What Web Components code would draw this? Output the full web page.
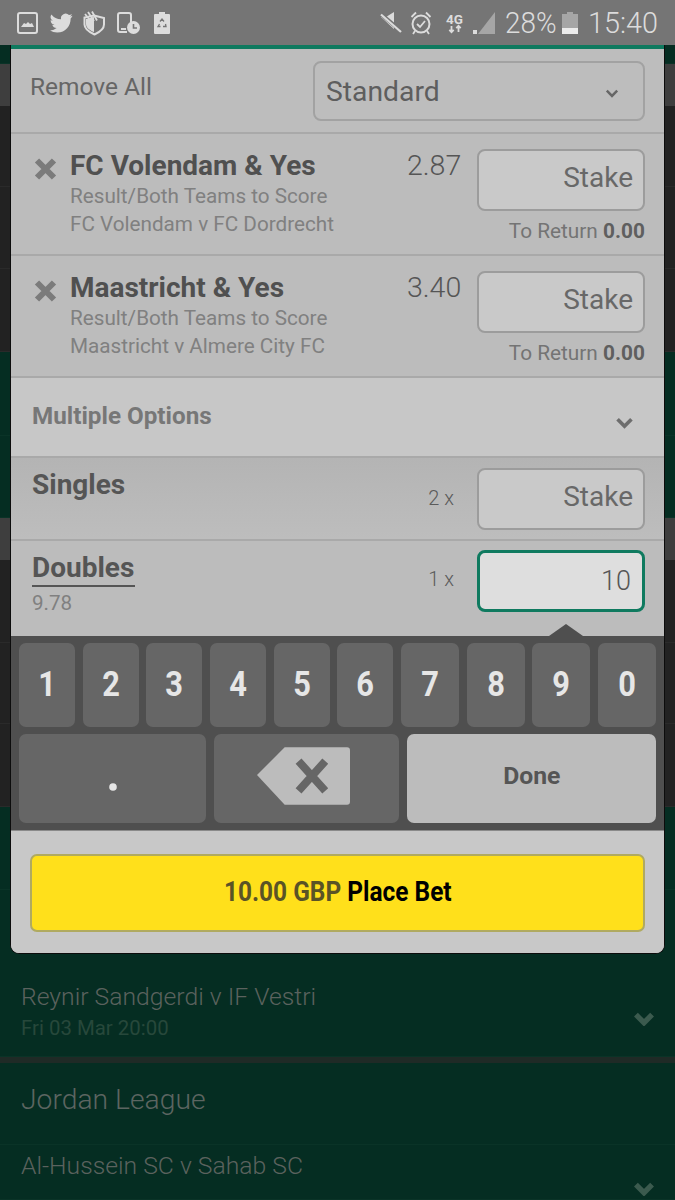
<!DOCTYPE html>
<html>
<head>
<meta charset="utf-8">
<title>Bet slip</title>
<style>
html,body{margin:0;padding:0;background:#052d22;}
body{width:675px;height:1200px;overflow:hidden;position:relative;font-family:Roboto,"Liberation Sans",sans-serif;}
</style>
</head>
<body>
<back-drop></back-drop>
<status-bar></status-bar>
<bet-slip>
  <slip-head></slip-head>
  <bet-row name="FC Volendam &amp; Yes" market="Result/Both Teams to Score" match="FC Volendam v FC Dordrecht" odds="2.87"></bet-row>
  <bet-row name="Maastricht &amp; Yes" market="Result/Both Teams to Score" match="Maastricht v Almere City FC" odds="3.40"></bet-row>
  <multi-head></multi-head>
  <multi-row kind="singles" name="Singles" count="2 x" value="Stake"></multi-row>
  <multi-row kind="doubles" name="Doubles" sub="9.78" count="1 x" value="10" focused></multi-row>
  <num-pad></num-pad>
  <place-bet></place-bet>
</bet-slip>

<script>
// text with a little horizontal tuning, the screenshot is stretched
class XT extends HTMLElement{
    constructor(){
        super();
        this.attachShadow({mode:"open"}).innerHTML = `
        <style>
        :host{display:inline-block;white-space:nowrap;transform:scaleX(var(--sx,1));transform-origin:var(--ox,left center);}
        </style><slot></slot>`;
    }
}
customElements.define("x-t",XT);

const chevron = (w,h,c,sw) => `<svg width="${w}" height="${h}" viewBox="0 0 20 13"><path d="M2.5 2.5 10 10l7.5-7.5" fill="none" stroke="${c}" stroke-width="${sw}"/></svg>`;

class BackDrop extends HTMLElement{
    constructor(){
        super();
        const band = (h,cls,inner='') => `<div class="b ${cls}" style="height:${h}px">${inner}</div>`;
        this.attachShadow({mode:"open"}).innerHTML = `
        <style>
        :host{display:block;}
        .b{box-sizing:border-box;position:relative;display:flex;flex-direction:column;}
        .g{background:#052d22;border-bottom:1px solid #0a3327;}
        .h{background:#3e3e3e;}
        .d{background:#222;border-bottom:1px solid #2a2a2a;}
        .sep{background:#1f2a26;}
        .row{padding:0 0 0 21px;flex-direction:row;justify-content:space-between;}
        .t{font-size:24px;color:#5b625e;line-height:28px;font-weight:300;--sx:1.03;}
        .s{font-size:20px;color:#27483b;line-height:24px;margin-top:5px;--sx:1.02;}
        .l{font-size:28px;color:#5c6561;font-weight:300;--sx:1.01;}
        .ch{align-self:flex-start;padding-right:20px;}
        </style>
        ${band(64,'g')}${band(42,'h')}
        ${band(81,'d')}${band(82,'d')}${band(83,'d')}
        ${band(84,'g')}${band(82,'g')}
        ${band(42,'h')}
        ${band(83,'d')}${band(81,'d')}${band(83,'d')}
        ${band(83,'g')}
        ${band(167,'g row',`<div style="padding-top:93px"><div class="t"><x-t>Reynir Sandgerdi v IF Vestri</x-t></div><div class="s"><x-t>Fri 03 Mar 20:00</x-t></div></div><div class="ch" style="padding-top:121px">${chevron(22,14,'#3b5a4e',5)}</div>`)}
        ${band(6,'sep')}
        ${band(82,'g row',`<div class="l" style="padding-top:20px"><x-t>Jordan League</x-t></div>`)}
        ${band(55,'g row',`<div class="t" style="padding-top:7px"><x-t>Al-Hussein SC v Sahab SC</x-t></div><div class="ch" style="padding-top:36px">${chevron(22,14,'#3b5a4e',5)}</div>`)}
        `;
    }
}
customElements.define("back-drop",BackDrop);

class StatusBar extends HTMLElement{
    constructor(){
        super();
        this.attachShadow({mode:"open"}).innerHTML = `
        <style>
        :host{position:absolute;left:0;top:0;width:675px;height:45px;box-sizing:border-box;background:#757575;display:flex;justify-content:space-between;align-items:center;padding:1px 18px 0 17px;color:#dcdcdc;}
        .side{display:flex;align-items:center;}
        svg{display:block;overflow:visible;}
        .pct,.time{font-size:30px;font-weight:300;line-height:44px;}
        .pct{--sx:.93;}
        .time{--sx:.96;}
        </style>
        <div class="side">
          <svg width="21" height="22" viewBox="0 0 21 22"><rect x="1" y="1" width="19" height="20" rx="2" fill="none" stroke="#dcdcdc" stroke-width="2"/><path d="M4 15l3-4 2 1 2-2 2 2 2-1 2 4z" fill="#dcdcdc"/></svg>
          <svg style="margin-left:12px" width="23" height="20" viewBox="0 0 24 20"><path d="M23.5 2.4a9.6 9.6 0 0 1-2.8.8A4.9 4.9 0 0 0 22.900.500a9.800 9.800 0 0 1-3.100 1.200 4.900 4.900 0 0 0-8.300 4.400A13.800 13.800 0 0 1 1.400 1a4.900 4.900 0 0 0 1.500 6.500 4.800 4.800 0 0 1-2.200-.6v.1a4.900 4.900 0 0 0 3.900 4.800 4.900 4.900 0 0 1-2.200.1 4.900 4.900 0 0 0 4.500 3.400A9.800 9.800 0 0 1 0 17.800 13.800 13.800 0 0 0 7.500 20c9 0 14-7.500 14-14v-.6a10 10 0 0 0 2-3z" fill="#dcdcdc"/></svg>
          <svg style="margin-left:9px" width="24" height="24" viewBox="0 0 24 24"><path d="M12 4.500l10 2.500v6.500c0 4.500-4 7.500-9.500 10C7 21 2.500 18 2.500 13.500V6.500z" fill="none" stroke="#dcdcdc" stroke-width="2"/><path d="M4 8 12 6v15c-4-1.500-8-4-8-8z" fill="#dcdcdc"/><path d="M6 1l6 9M10 .5l5 9M3 3l5 6" stroke="#dcdcdc" stroke-width="1.800" fill="none"/></svg>
          <svg style="margin-left:11px" width="23" height="22" viewBox="0 0 23 22"><path d="M10 20H3a2 2 0 0 1-2-2V3a2 2 0 0 1 2-2h9a2 2 0 0 1 2 2v7" fill="none" stroke="#dcdcdc" stroke-width="2"/><path d="M4 17h5" stroke="#dcdcdc" stroke-width="2"/><circle cx="16.500" cy="15.500" r="6.500" fill="#dcdcdc"/><path d="M16.500 12v4h3.500" fill="none" stroke="#757575" stroke-width="1.600"/></svg>
          <svg style="margin-left:14px" width="16" height="22" viewBox="0 0 16 22"><path d="M5 0h6v2h4a1 1 0 0 1 1 1v18a1 1 0 0 1-1 1H1a1 1 0 0 1-1-1V3a1 1 0 0 1 1-1h4z" fill="#dcdcdc"/><path d="M6 9.500l2-2.500 2 2.500M11.500 12l.5 2.500H9M6.500 14.500H4l1.500-2.500" fill="none" stroke="#757575" stroke-width="1.300"/></svg>
        </div>
        <div class="side">
          <svg width="23" height="22" viewBox="0 0 23 22"><path d="M1 5h5l8-5v17z" fill="#dcdcdc"/><path d="M1 2l21 18" stroke="#757575" stroke-width="4"/><path d="M1 2.500l20 17.500" stroke="#dcdcdc" stroke-width="2.200"/></svg>
          <svg style="margin-left:7px" width="22" height="24" viewBox="0 0 22 24"><circle cx="11" cy="13" r="8.500" fill="none" stroke="#dcdcdc" stroke-width="2"/><path d="M7 13l3 3 5-6" fill="none" stroke="#dcdcdc" stroke-width="1.800"/><path d="M1.500 6 6 1.500M20.500 6 16 1.500M5 20l-2 3M17 20l2 3" stroke="#dcdcdc" stroke-width="1.800"/></svg>
          <div class="net" style="margin-left:13px;width:19px;height:21px;display:flex;flex-direction:column;align-items:center;font-size:13.5px;font-weight:700;line-height:12px;"><span>4G</span><svg width="14" height="8" viewBox="0 0 14 8"><path d="M3.500 1v6M1.300 4.800 3.500 7.200l2.200-2.400M10.500 7V1M8.300 3.200 10.500.8l2.200 2.400" stroke="#dcdcdc" stroke-width="1.800" fill="none"/></svg></div>
          <svg style="margin-left:9px" width="22" height="22" viewBox="0 0 22 22"><path d="M22 0v22H5z" fill="#a6a6a6"/><path d="M0 22v-4l4 0v4z" fill="#dcdcdc"/></svg>
          <div class="pct" style="margin-left:10px;width:52px"><x-t>28%</x-t></div>
          <svg style="margin-left:5px" width="16" height="22" viewBox="0 0 16 22"><path d="M5 0h6v2h5v20H0V2h5z" fill="#a6a6a6"/><rect y="16" width="16" height="6" fill="#ececec"/></svg>
          <div class="time" style="margin-left:10px;width:69px"><x-t>15:40</x-t></div>
        </div>`;
    }
}
customElements.define("status-bar",StatusBar);

class BetSlip extends HTMLElement{
    constructor(){
        super();
        this.attachShadow({mode:"open"}).innerHTML = `
        <style>
        :host{position:absolute;left:10px;top:45px;width:655px;height:909px;box-sizing:border-box;border:1px solid #0c0c0c;border-top:0;border-radius:0 0 9px 9px;overflow:hidden;background:#c8c8c8;display:flex;flex-direction:column;}
        .bar{height:4px;flex:none;background:#0f7a5f;}
        </style>
        <div class="bar"></div><slot></slot>`;
    }
}
customElements.define("bet-slip",BetSlip);

class SlipHead extends HTMLElement{
    constructor(){
        super();
        this.attachShadow({mode:"open"}).innerHTML = `
        <style>
        :host{display:flex;flex:none;height:85px;box-sizing:border-box;background:#bdbdbd;border-bottom:2px solid #a9a9a9;padding:12px 19px 0 19px;justify-content:space-between;align-items:flex-start;}
        .rm{font-size:24px;color:#666;font-weight:400;line-height:28px;margin-top:12px;--sx:1.02;}
        .sel{box-sizing:border-box;width:332px;height:60px;border:2px solid #a2a2a2;border-radius:8px;background:#bdbdbd;display:flex;align-items:center;justify-content:space-between;padding:0 24px 0 11px;font-size:28px;color:#5e5e5e;--sx:1.01;}
        svg{margin-top:5px;}
        </style>
        <div class="rm"><x-t>Remove All</x-t></div>
        <div class="sel"><x-t>Standard</x-t>${chevron(14,9,'#666',3.6)}</div>`;
    }
}
customElements.define("slip-head",SlipHead);

class StakeBox extends HTMLElement{
    connectedCallback(){
        const on = this.hasAttribute('focused');
        this.attachShadow({mode:"open"}).innerHTML = `
        <style>
        :host{display:flex;flex:none;box-sizing:border-box;width:168px;height:62px;border-radius:8px;align-items:center;justify-content:flex-end;
          border:${on?'3px solid #0f7a5f':'2px solid #9c9c9c'};background:${on?'#dedede':'#c9c9c9'};
          padding:0 ${on?'11px':'10px'} ${on?'0':'6px'} 0;font-size:${on?'27px':'28px'};color:${on?'#555':'#686868'};font-weight:${on?300:400};--ox:right center;}
        </style>
        <x-t>${this.getAttribute('value')||'Stake'}</x-t>`;
    }
}
customElements.define("stake-box",StakeBox);

class BetRow extends HTMLElement{
    connectedCallback(){
        const a = n => this.getAttribute(n).replace('&','&amp;');
        this.attachShadow({mode:"open"}).innerHTML = `
        <style>
        :host{display:grid;flex:none;grid-template-columns:23px 1fr auto 168px;height:122px;box-sizing:border-box;background:#bcbcbc;border-bottom:2px solid #a9a9a9;padding:15px 19px 0 23px;}
        svg{margin-top:9px;display:block;}
        .txt{padding-left:13px;}
        .n{font-size:28px;font-weight:700;color:#505050;line-height:34px;}
        .m{font-size:21px;color:#808080;line-height:28px;--sx:.985;}
        .m.f{margin-top:-1px;}
        .o{font-size:28px;font-weight:300;color:#555;line-height:34px;padding-right:16px;--sx:1.02;--ox:right center;}
        .r{text-align:right;font-size:20px;color:#747474;line-height:24px;margin-top:8px;--ox:right center;--sx:1.04;}
        b{color:#5f5f5f;}
        </style>
        <svg width="23" height="22" viewBox="0 0 23 22"><path d="M3 2.500 20 19.500M20 2.500 3 19.500" stroke="#7b7b7b" stroke-width="6"/></svg>
        <div class="txt">
          <div class="n"><x-t>${a('name')}</x-t></div>
          <div class="m f"><x-t>${a('market')}</x-t></div>
          <div class="m"><x-t>${a('match')}</x-t></div>
        </div>
        <div class="o"><x-t>${a('odds')}</x-t></div>
        <div class="col"><stake-box></stake-box><div class="r"><x-t>To Return <b>0.00</b></x-t></div></div>`;
    }
}
customElements.define("bet-row",BetRow);

class MultiHead extends HTMLElement{
    constructor(){
        super();
        this.attachShadow({mode:"open"}).innerHTML = `
        <style>
        :host{display:flex;flex:none;height:80px;box-sizing:border-box;background:#c7c7c7;border-bottom:2px solid #a9a9a9;padding:22px 30px 0 21px;justify-content:space-between;}
        .t{font-size:24px;font-weight:700;color:#777;line-height:32px;--sx:1.01;}
        svg{margin-top:17px;}
        </style>
        <div class="t"><x-t>Multiple Options</x-t></div>${chevron(19,12,'#6d6d6d',4)}`;
    }
}
customElements.define("multi-head",MultiHead);

class MultiRow extends HTMLElement{
    connectedCallback(){
        const doubles = this.getAttribute('kind')=='doubles';
        const sub = this.getAttribute('sub');
        const focused = this.hasAttribute('focused') ? 'focused' : '';
        this.attachShadow({mode:"open"}).innerHTML = `
        <style>
        :host{display:flex;flex:none;box-sizing:border-box;position:relative;height:${doubles?95:83}px;padding:${doubles?'9px':'10px'} 19px 0 21px;
          background:${doubles?'#bcbcbc':'linear-gradient(#b4b4b4,#bdbdbd)'};${doubles?'':'border-bottom:2px solid #a9a9a9;'}}
        .l{flex:1;padding-top:${doubles?'1px':'0'};}
        .n{font-size:28px;font-weight:700;color:#555;line-height:34px;}
        .u{display:inline-block;border-bottom:2px solid #555;line-height:32px;height:33px;width:103px;}
        .s{font-size:20px;color:#808080;line-height:24px;margin-top:4px;--sx:1.03;}
        .c{font-size:20px;font-weight:300;color:#5a5a5a;margin-right:3px;line-height:24px;padding:${doubles?'17px':'18px'} 20px 0 0;--ox:right center;}
        .tip{position:absolute;right:81px;bottom:0;width:0;height:0;border:solid transparent;border-width:0 17px 12px;border-bottom-color:#4f4f4f;}
        </style>
        <div class="l">
          <div class="n"><span class="${doubles?'u':''}"><x-t>${this.getAttribute('name')}</x-t></span></div>
          ${sub?`<div class="s"><x-t>${sub}</x-t></div>`:''}
        </div>
        <div class="c"><x-t>${this.getAttribute('count')}</x-t></div>
        <stake-box value="${this.getAttribute('value')}" ${focused}></stake-box>
        ${doubles?'<div class="tip"></div>':''}`;
    }
}
customElements.define("multi-row",MultiRow);

class NumPad extends HTMLElement{
    constructor(){
        super();
        const keys = [...'1234567890'].map(k=>`<div class="k"><x-t>${k}</x-t></div>`).join('');
        this.attachShadow({mode:"open"}).innerHTML = `
        <style>
        :host{display:flex;flex:none;flex-direction:column;gap:7px;height:195px;box-sizing:border-box;background:#4f4f4f;padding:7px 8px;border-bottom:1px solid #8a8a8a;--ox:center;}
        .r1{display:grid;grid-template-columns:repeat(6,56px) repeat(4,58px);column-gap:7.66px;height:84px;}
        .r2{display:grid;grid-template-columns:187px 185px 249px;column-gap:8px;height:90px;}
        .k{background:#666;border-radius:7px;color:#e6e6e6;font-size:35px;font-weight:700;display:flex;align-items:center;justify-content:center;--sx:.88;}
        .dot{padding-top:18px;box-sizing:border-box;}
        .done{background:#bcbcbc;color:#555;font-size:24px;font-weight:700;padding-bottom:4px;box-sizing:border-box;--sx:1.03;}
        .bk{padding-bottom:4px;padding-right:7px;box-sizing:border-box;}
        </style>
        <div class="r1">${keys}</div>
        <div class="r2">
          <div class="k dot"><svg width="8" height="8" viewBox="0 0 8 8" style="display:block"><circle cx="4" cy="4" r="3.800" fill="#e6e6e6"/></svg></div>
          <div class="k bk"><svg width="93" height="58" viewBox="0 0 94 58"><path d="M28 0h63a3 3 0 0 1 3 3v52a3 3 0 0 1-3 3H28L0 28z" fill="#bcbcbc"/><path d="M42 14 69 44M69 14 42 44" stroke="#666" stroke-width="8"/></svg></div>
          <div class="k done"><x-t>Done</x-t></div>
        </div>`;
    }
}
customElements.define("num-pad",NumPad);

class PlaceBet extends HTMLElement{
    constructor(){
        super();
        this.attachShadow({mode:"open"}).innerHTML = `
        <style>
        :host{display:block;flex:1;box-sizing:border-box;background:#c8c8c8;padding:23px 19px 0 19px;}
        .btn{box-sizing:border-box;height:78px;border:2px solid #b0aa60;border-radius:7px;background:#ffe01b;display:flex;align-items:center;justify-content:center;font-size:27px;font-weight:700;color:#000;--ox:center;--sx:.905;padding-bottom:2px;}
        span{color:#5a5326;}
        </style>
        <div class="btn"><x-t><span>10.00 GBP</span> Place Bet</x-t></div>`;
    }
}
customElements.define("place-bet",PlaceBet);
</script>
</body>
</html>
